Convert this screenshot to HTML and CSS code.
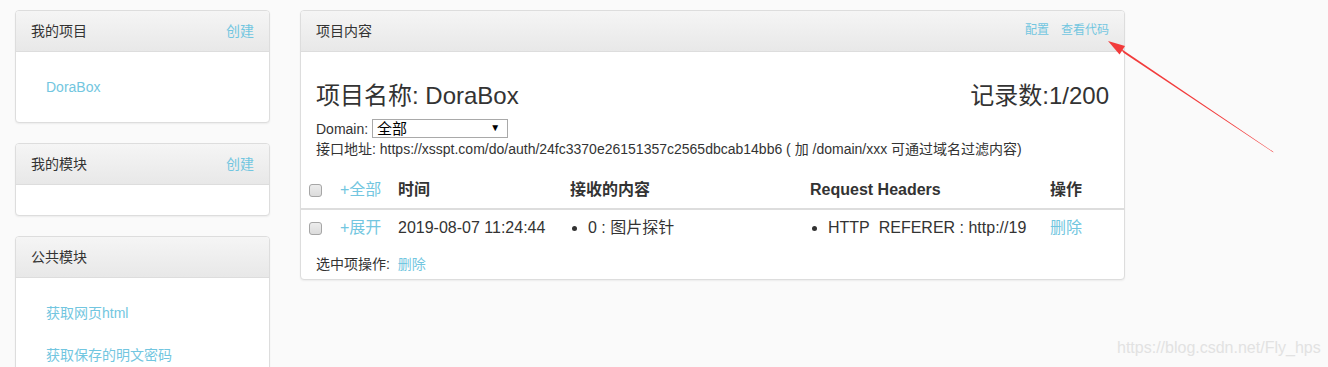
FILE: index.html
```html
<!DOCTYPE html>
<html lang="zh-CN">
<head>
    <meta charset="UTF-8">
    <meta name="viewport" content="width=device-width, initial-scale=1.0">
    <title>项目内容</title>
    <link rel="stylesheet" href="styles.css">
</head>
<body>
    <div class="page">
        <div class="sidebar">
            <div class="panel">
                <div class="panel-heading">
                    <span>我的项目</span>
                    <a href="#">创建</a>
                </div>
                <div class="panel-body">
                    <ul class="nav">
                        <li><a href="#">DoraBox</a></li>
                    </ul>
                </div>
            </div>

            <div class="panel">
                <div class="panel-heading">
                    <span>我的模块</span>
                    <a href="#">创建</a>
                </div>
                <div class="panel-body"></div>
            </div>

            <div class="panel">
                <div class="panel-heading">
                    <span>公共模块</span>
                </div>
                <div class="panel-body">
                    <ul class="nav">
                        <li><a href="#">获取网页html</a></li>
                        <li><a href="#">获取保存的明文密码</a></li>
                    </ul>
                </div>
            </div>
        </div>

        <div class="main">
            <div class="panel">
                <div class="panel-heading">
                    <span>项目内容</span>
                    <span class="heading-links">
                        <a href="#">配置</a>
                        <a href="#">查看代码</a>
                    </span>
                </div>
                <div class="project-info">
                    <div class="title-row">
                        <h3>项目名称: DoraBox</h3>
                        <h3>记录数:1/200</h3>
                    </div>
                    <div class="info-line">
                        Domain:
                        <span class="select-wrap">
                            <select>
                                <option>全部</option>
                            </select>
                        </span>
                    </div>
                    <div class="info-line">接口地址: https://xsspt.com/do/auth/24fc3370e26151357c2565dbcab14bb6 ( 加 /domain/xxx 可通过域名过滤内容)</div>
                </div>

                <table class="records">
                    <colgroup>
                        <col style="width: 31px">
                        <col style="width: 58px">
                        <col style="width: 172px">
                        <col style="width: 240px">
                        <col style="width: 240px">
                        <col>
                    </colgroup>
                    <thead>
                        <tr>
                            <th><input type="checkbox"></th>
                            <th><a href="#" class="plain">+全部</a></th>
                            <th>时间</th>
                            <th>接收的内容</th>
                            <th>Request Headers</th>
                            <th>操作</th>
                        </tr>
                    </thead>
                    <tbody>
                        <tr>
                            <td><input type="checkbox"></td>
                            <td><a href="#">+展开</a></td>
                            <td>2019-08-07 11:24:44</td>
                            <td><ul><li>0 : 图片探针</li></ul></td>
                            <td class="clip"><ul><li>HTTP&nbsp;&nbsp;REFERER : http://19</li></ul></td>
                            <td><a href="#">删除</a></td>
                        </tr>
                    </tbody>
                </table>

                <div class="batch">选中项操作: &nbsp;<a href="#">删除</a></div>
            </div>
        </div>
    </div>

    <svg class="arrow" width="1328" height="367" viewBox="0 0 1328 367">
        <polygon points="1108,41 1125,46 1119.5,54.5" fill="#f23b3b"/>
        <polygon points="1121,48.8 1123.5,52.8 1273.5,152.5 1273,151.6" fill="#f23b3b"/>
    </svg>

    <div class="watermark">https://blog.csdn.net/Fly_hps</div>
</body>
</html>
```

FILE: styles.css
```css
body {
    margin: 0;
    background: #fafafa;
    font-family: "Liberation Sans", Arial, "Noto Sans CJK SC", sans-serif;
    font-size: 14px;
    color: #333;
}
a {
    color: #72c6e0;
    text-decoration: none;
}
.page {
    display: flex;
    align-items: flex-start;
    gap: 30px;
    padding: 10px 0 0 15px;
}
.sidebar {
    width: 255px;
    display: flex;
    flex-direction: column;
    gap: 20px;
}
.main {
    width: 825px;
}
.panel {
    background: white;
    border: 1px solid #ddd;
    border-radius: 4px;
    box-shadow: 0 1px 2px rgba(0,0,0,0.06);
}
.panel-heading {
    display: flex;
    justify-content: space-between;
    align-items: center;
    height: 20px;
    padding: 10px 15px;
    line-height: 20px;
    background: linear-gradient(#f5f5f5, #e8e8e8);
    border-bottom: 1px solid #ddd;
    border-radius: 3px 3px 0 0;
}
.heading-links {
    display: flex;
    gap: 12px;
    font-size: 12px;
    margin-top: -3px;
}
.panel-body {
    padding: 15px;
}
.nav {
    list-style: none;
    margin: 0;
    padding: 0;
}
.nav li + li {
    margin-top: 2px;
}
.nav a {
    display: block;
    padding: 10px 15px;
    line-height: 20px;
}
.project-info {
    padding: 30px 15px 0;
}
.title-row {
    display: flex;
    justify-content: space-between;
    margin-bottom: 9px;
}
.title-row h3 {
    margin: 0;
    font-size: 24px;
    font-weight: normal;
    line-height: 28px;
}
.info-line {
    line-height: 20px;
}
.select-wrap {
    position: relative;
    display: inline-block;
    vertical-align: top;
}
.select-wrap select {
    appearance: none;
    width: 136px;
    height: 19px;
    margin: 0;
    padding: 0 4px;
    border: 1px solid #a9a9a9;
    border-radius: 0;
    background: white;
    font-family: inherit;
    font-size: 15px;
    color: #000;
}
.select-wrap::after {
    content: "▼";
    position: absolute;
    right: 8px;
    top: 2px;
    font-size: 10px;
    line-height: 14px;
    color: #000;
    pointer-events: none;
}
.records {
    width: 100%;
    margin-top: 13px;
    border-collapse: collapse;
    table-layout: fixed;
    font-size: 16px;
}
.records th,
.records td {
    padding: 8px;
    line-height: 20px;
    text-align: left;
    vertical-align: middle;
    white-space: nowrap;
}
.records th {
    font-weight: bold;
    border-bottom: 2px solid #ddd;
}
.records th a.plain {
    font-weight: normal;
}
.records ul {
    margin: 0;
    padding-left: 18px;
}
.records .clip {
    overflow: hidden;
}
.records input[type="checkbox"] {
    appearance: none;
    display: block;
    width: 13px;
    height: 13px;
    margin: 0;
    border: 1px solid #a6a6a6;
    border-radius: 3px;
    background: linear-gradient(#ececec, #dcdcdc);
}
.batch {
    padding: 0 15px 5px;
    line-height: 20px;
    margin-top: 8px;
}
.arrow {
    position: absolute;
    top: 0;
    left: 0;
    pointer-events: none;
}
.watermark {
    position: absolute;
    left: 1117px;
    top: 338px;
    font-size: 16px;
    line-height: 20px;
    color: #e2e2e2;
}
```
